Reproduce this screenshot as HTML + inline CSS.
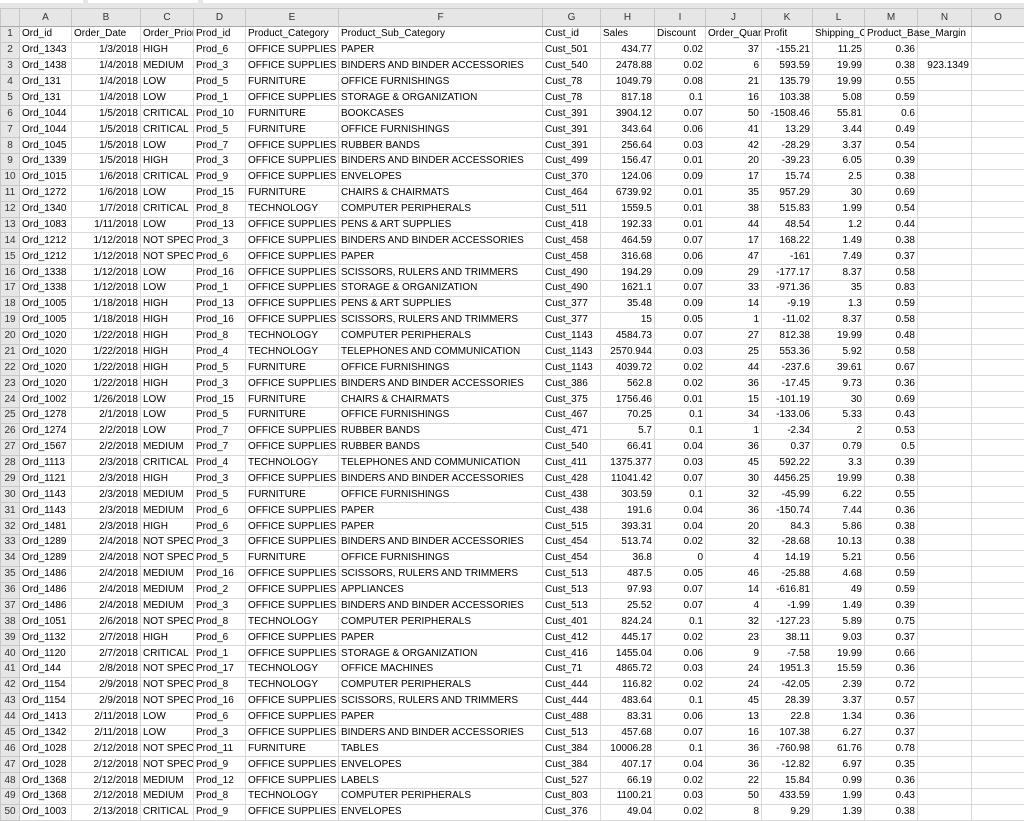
<!DOCTYPE html>
<html><head><meta charset="utf-8"><style>
body{margin:0;width:1024px;height:819px;overflow:hidden;background:#fff;font-family:"Liberation Sans",Arial,sans-serif;font-size:10px;color:#000;position:relative}
.top{position:absolute;left:0;top:0;width:1024px;height:8px;background:#e6e6e6}
.top div{position:absolute;top:0;height:3px;background:#fff}
table{position:absolute;left:0;top:8px;border-collapse:collapse;table-layout:fixed;width:1024px}
td,th{border:1px solid #d9d9d9;padding:0 2px;white-space:nowrap;overflow:hidden;height:14.88px;line-height:14px;font-weight:normal;box-sizing:border-box}
tr{height:15.88px}
th{background:#e6e6e6;color:#333;text-align:center;border-color:#c8c8c8}
tr.h{height:18px}
tr.h th{height:18px;border-bottom:1px solid #aaa}
td:nth-child(3),td:nth-child(n+9){text-align:right}
tr.f td{text-align:left}
</style></head><body>
<div class="top"><div style="left:0;width:83px"></div><div style="left:88px;width:110px"></div><div style="left:203px;width:821px"></div></div>
<table>
<colgroup><col style="width:19px"><col style="width:52px"><col style="width:69px"><col style="width:53px"><col style="width:52px"><col style="width:93px"><col style="width:204px"><col style="width:58px"><col style="width:54px"><col style="width:51px"><col style="width:56px"><col style="width:51px"><col style="width:52px"><col style="width:53px"><col style="width:54px"><col style="width:53px"></colgroup>
<tr class="h"><th></th><th>A</th><th>B</th><th>C</th><th>D</th><th>E</th><th>F</th><th>G</th><th>H</th><th>I</th><th>J</th><th>K</th><th>L</th><th>M</th><th>N</th><th>O</th></tr>
<tr class="f"><th>1</th><td>Ord_id<td>Order_Date<td>Order_Priority<td>Prod_id<td>Product_Category<td>Product_Sub_Category<td>Cust_id<td>Sales<td>Discount<td>Order_Quantity<td>Profit<td>Shipping_Cost<td style="overflow:visible">Product_Base_Margin<td><td></tr>
<tr><th>2</th><td>Ord_1343<td>1/3/2018<td>HIGH<td>Prod_6<td>OFFICE SUPPLIES<td>PAPER<td>Cust_501<td>434.77<td>0.02<td>37<td>-155.21<td>11.25<td>0.36<td><td></tr>
<tr><th>3</th><td>Ord_1438<td>1/4/2018<td>MEDIUM<td>Prod_3<td>OFFICE SUPPLIES<td>BINDERS AND BINDER ACCESSORIES<td>Cust_540<td>2478.88<td>0.02<td>6<td>593.59<td>19.99<td>0.38<td>923.1349<td></tr>
<tr><th>4</th><td>Ord_131<td>1/4/2018<td>LOW<td>Prod_5<td>FURNITURE<td>OFFICE FURNISHINGS<td>Cust_78<td>1049.79<td>0.08<td>21<td>135.79<td>19.99<td>0.55<td><td></tr>
<tr><th>5</th><td>Ord_131<td>1/4/2018<td>LOW<td>Prod_1<td>OFFICE SUPPLIES<td>STORAGE &amp; ORGANIZATION<td>Cust_78<td>817.18<td>0.1<td>16<td>103.38<td>5.08<td>0.59<td><td></tr>
<tr><th>6</th><td>Ord_1044<td>1/5/2018<td>CRITICAL<td>Prod_10<td>FURNITURE<td>BOOKCASES<td>Cust_391<td>3904.12<td>0.07<td>50<td>-1508.46<td>55.81<td>0.6<td><td></tr>
<tr><th>7</th><td>Ord_1044<td>1/5/2018<td>CRITICAL<td>Prod_5<td>FURNITURE<td>OFFICE FURNISHINGS<td>Cust_391<td>343.64<td>0.06<td>41<td>13.29<td>3.44<td>0.49<td><td></tr>
<tr><th>8</th><td>Ord_1045<td>1/5/2018<td>LOW<td>Prod_7<td>OFFICE SUPPLIES<td>RUBBER BANDS<td>Cust_391<td>256.64<td>0.03<td>42<td>-28.29<td>3.37<td>0.54<td><td></tr>
<tr><th>9</th><td>Ord_1339<td>1/5/2018<td>HIGH<td>Prod_3<td>OFFICE SUPPLIES<td>BINDERS AND BINDER ACCESSORIES<td>Cust_499<td>156.47<td>0.01<td>20<td>-39.23<td>6.05<td>0.39<td><td></tr>
<tr><th>10</th><td>Ord_1015<td>1/6/2018<td>CRITICAL<td>Prod_9<td>OFFICE SUPPLIES<td>ENVELOPES<td>Cust_370<td>124.06<td>0.09<td>17<td>15.74<td>2.5<td>0.38<td><td></tr>
<tr><th>11</th><td>Ord_1272<td>1/6/2018<td>LOW<td>Prod_15<td>FURNITURE<td>CHAIRS &amp; CHAIRMATS<td>Cust_464<td>6739.92<td>0.01<td>35<td>957.29<td>30<td>0.69<td><td></tr>
<tr><th>12</th><td>Ord_1340<td>1/7/2018<td>CRITICAL<td>Prod_8<td>TECHNOLOGY<td>COMPUTER PERIPHERALS<td>Cust_511<td>1559.5<td>0.01<td>38<td>515.83<td>1.99<td>0.54<td><td></tr>
<tr><th>13</th><td>Ord_1083<td>1/11/2018<td>LOW<td>Prod_13<td>OFFICE SUPPLIES<td>PENS &amp; ART SUPPLIES<td>Cust_418<td>192.33<td>0.01<td>44<td>48.54<td>1.2<td>0.44<td><td></tr>
<tr><th>14</th><td>Ord_1212<td>1/12/2018<td>NOT SPECIFIED<td>Prod_3<td>OFFICE SUPPLIES<td>BINDERS AND BINDER ACCESSORIES<td>Cust_458<td>464.59<td>0.07<td>17<td>168.22<td>1.49<td>0.38<td><td></tr>
<tr><th>15</th><td>Ord_1212<td>1/12/2018<td>NOT SPECIFIED<td>Prod_6<td>OFFICE SUPPLIES<td>PAPER<td>Cust_458<td>316.68<td>0.06<td>47<td>-161<td>7.49<td>0.37<td><td></tr>
<tr><th>16</th><td>Ord_1338<td>1/12/2018<td>LOW<td>Prod_16<td>OFFICE SUPPLIES<td>SCISSORS, RULERS AND TRIMMERS<td>Cust_490<td>194.29<td>0.09<td>29<td>-177.17<td>8.37<td>0.58<td><td></tr>
<tr><th>17</th><td>Ord_1338<td>1/12/2018<td>LOW<td>Prod_1<td>OFFICE SUPPLIES<td>STORAGE &amp; ORGANIZATION<td>Cust_490<td>1621.1<td>0.07<td>33<td>-971.36<td>35<td>0.83<td><td></tr>
<tr><th>18</th><td>Ord_1005<td>1/18/2018<td>HIGH<td>Prod_13<td>OFFICE SUPPLIES<td>PENS &amp; ART SUPPLIES<td>Cust_377<td>35.48<td>0.09<td>14<td>-9.19<td>1.3<td>0.59<td><td></tr>
<tr><th>19</th><td>Ord_1005<td>1/18/2018<td>HIGH<td>Prod_16<td>OFFICE SUPPLIES<td>SCISSORS, RULERS AND TRIMMERS<td>Cust_377<td>15<td>0.05<td>1<td>-11.02<td>8.37<td>0.58<td><td></tr>
<tr><th>20</th><td>Ord_1020<td>1/22/2018<td>HIGH<td>Prod_8<td>TECHNOLOGY<td>COMPUTER PERIPHERALS<td>Cust_1143<td>4584.73<td>0.07<td>27<td>812.38<td>19.99<td>0.48<td><td></tr>
<tr><th>21</th><td>Ord_1020<td>1/22/2018<td>HIGH<td>Prod_4<td>TECHNOLOGY<td>TELEPHONES AND COMMUNICATION<td>Cust_1143<td>2570.944<td>0.03<td>25<td>553.36<td>5.92<td>0.58<td><td></tr>
<tr><th>22</th><td>Ord_1020<td>1/22/2018<td>HIGH<td>Prod_5<td>FURNITURE<td>OFFICE FURNISHINGS<td>Cust_1143<td>4039.72<td>0.02<td>44<td>-237.6<td>39.61<td>0.67<td><td></tr>
<tr><th>23</th><td>Ord_1020<td>1/22/2018<td>HIGH<td>Prod_3<td>OFFICE SUPPLIES<td>BINDERS AND BINDER ACCESSORIES<td>Cust_386<td>562.8<td>0.02<td>36<td>-17.45<td>9.73<td>0.36<td><td></tr>
<tr><th>24</th><td>Ord_1002<td>1/26/2018<td>LOW<td>Prod_15<td>FURNITURE<td>CHAIRS &amp; CHAIRMATS<td>Cust_375<td>1756.46<td>0.01<td>15<td>-101.19<td>30<td>0.69<td><td></tr>
<tr><th>25</th><td>Ord_1278<td>2/1/2018<td>LOW<td>Prod_5<td>FURNITURE<td>OFFICE FURNISHINGS<td>Cust_467<td>70.25<td>0.1<td>34<td>-133.06<td>5.33<td>0.43<td><td></tr>
<tr><th>26</th><td>Ord_1274<td>2/2/2018<td>LOW<td>Prod_7<td>OFFICE SUPPLIES<td>RUBBER BANDS<td>Cust_471<td>5.7<td>0.1<td>1<td>-2.34<td>2<td>0.53<td><td></tr>
<tr><th>27</th><td>Ord_1567<td>2/2/2018<td>MEDIUM<td>Prod_7<td>OFFICE SUPPLIES<td>RUBBER BANDS<td>Cust_540<td>66.41<td>0.04<td>36<td>0.37<td>0.79<td>0.5<td><td></tr>
<tr><th>28</th><td>Ord_1113<td>2/3/2018<td>CRITICAL<td>Prod_4<td>TECHNOLOGY<td>TELEPHONES AND COMMUNICATION<td>Cust_411<td>1375.377<td>0.03<td>45<td>592.22<td>3.3<td>0.39<td><td></tr>
<tr><th>29</th><td>Ord_1121<td>2/3/2018<td>HIGH<td>Prod_3<td>OFFICE SUPPLIES<td>BINDERS AND BINDER ACCESSORIES<td>Cust_428<td>11041.42<td>0.07<td>30<td>4456.25<td>19.99<td>0.38<td><td></tr>
<tr><th>30</th><td>Ord_1143<td>2/3/2018<td>MEDIUM<td>Prod_5<td>FURNITURE<td>OFFICE FURNISHINGS<td>Cust_438<td>303.59<td>0.1<td>32<td>-45.99<td>6.22<td>0.55<td><td></tr>
<tr><th>31</th><td>Ord_1143<td>2/3/2018<td>MEDIUM<td>Prod_6<td>OFFICE SUPPLIES<td>PAPER<td>Cust_438<td>191.6<td>0.04<td>36<td>-150.74<td>7.44<td>0.36<td><td></tr>
<tr><th>32</th><td>Ord_1481<td>2/3/2018<td>HIGH<td>Prod_6<td>OFFICE SUPPLIES<td>PAPER<td>Cust_515<td>393.31<td>0.04<td>20<td>84.3<td>5.86<td>0.38<td><td></tr>
<tr><th>33</th><td>Ord_1289<td>2/4/2018<td>NOT SPECIFIED<td>Prod_3<td>OFFICE SUPPLIES<td>BINDERS AND BINDER ACCESSORIES<td>Cust_454<td>513.74<td>0.02<td>32<td>-28.68<td>10.13<td>0.38<td><td></tr>
<tr><th>34</th><td>Ord_1289<td>2/4/2018<td>NOT SPECIFIED<td>Prod_5<td>FURNITURE<td>OFFICE FURNISHINGS<td>Cust_454<td>36.8<td>0<td>4<td>14.19<td>5.21<td>0.56<td><td></tr>
<tr><th>35</th><td>Ord_1486<td>2/4/2018<td>MEDIUM<td>Prod_16<td>OFFICE SUPPLIES<td>SCISSORS, RULERS AND TRIMMERS<td>Cust_513<td>487.5<td>0.05<td>46<td>-25.88<td>4.68<td>0.59<td><td></tr>
<tr><th>36</th><td>Ord_1486<td>2/4/2018<td>MEDIUM<td>Prod_2<td>OFFICE SUPPLIES<td>APPLIANCES<td>Cust_513<td>97.93<td>0.07<td>14<td>-616.81<td>49<td>0.59<td><td></tr>
<tr><th>37</th><td>Ord_1486<td>2/4/2018<td>MEDIUM<td>Prod_3<td>OFFICE SUPPLIES<td>BINDERS AND BINDER ACCESSORIES<td>Cust_513<td>25.52<td>0.07<td>4<td>-1.99<td>1.49<td>0.39<td><td></tr>
<tr><th>38</th><td>Ord_1051<td>2/6/2018<td>NOT SPECIFIED<td>Prod_8<td>TECHNOLOGY<td>COMPUTER PERIPHERALS<td>Cust_401<td>824.24<td>0.1<td>32<td>-127.23<td>5.89<td>0.75<td><td></tr>
<tr><th>39</th><td>Ord_1132<td>2/7/2018<td>HIGH<td>Prod_6<td>OFFICE SUPPLIES<td>PAPER<td>Cust_412<td>445.17<td>0.02<td>23<td>38.11<td>9.03<td>0.37<td><td></tr>
<tr><th>40</th><td>Ord_1120<td>2/7/2018<td>CRITICAL<td>Prod_1<td>OFFICE SUPPLIES<td>STORAGE &amp; ORGANIZATION<td>Cust_416<td>1455.04<td>0.06<td>9<td>-7.58<td>19.99<td>0.66<td><td></tr>
<tr><th>41</th><td>Ord_144<td>2/8/2018<td>NOT SPECIFIED<td>Prod_17<td>TECHNOLOGY<td>OFFICE MACHINES<td>Cust_71<td>4865.72<td>0.03<td>24<td>1951.3<td>15.59<td>0.36<td><td></tr>
<tr><th>42</th><td>Ord_1154<td>2/9/2018<td>NOT SPECIFIED<td>Prod_8<td>TECHNOLOGY<td>COMPUTER PERIPHERALS<td>Cust_444<td>116.82<td>0.02<td>24<td>-42.05<td>2.39<td>0.72<td><td></tr>
<tr><th>43</th><td>Ord_1154<td>2/9/2018<td>NOT SPECIFIED<td>Prod_16<td>OFFICE SUPPLIES<td>SCISSORS, RULERS AND TRIMMERS<td>Cust_444<td>483.64<td>0.1<td>45<td>28.39<td>3.37<td>0.57<td><td></tr>
<tr><th>44</th><td>Ord_1413<td>2/11/2018<td>LOW<td>Prod_6<td>OFFICE SUPPLIES<td>PAPER<td>Cust_488<td>83.31<td>0.06<td>13<td>22.8<td>1.34<td>0.36<td><td></tr>
<tr><th>45</th><td>Ord_1342<td>2/11/2018<td>LOW<td>Prod_3<td>OFFICE SUPPLIES<td>BINDERS AND BINDER ACCESSORIES<td>Cust_513<td>457.68<td>0.07<td>16<td>107.38<td>6.27<td>0.37<td><td></tr>
<tr><th>46</th><td>Ord_1028<td>2/12/2018<td>NOT SPECIFIED<td>Prod_11<td>FURNITURE<td>TABLES<td>Cust_384<td>10006.28<td>0.1<td>36<td>-760.98<td>61.76<td>0.78<td><td></tr>
<tr><th>47</th><td>Ord_1028<td>2/12/2018<td>NOT SPECIFIED<td>Prod_9<td>OFFICE SUPPLIES<td>ENVELOPES<td>Cust_384<td>407.17<td>0.04<td>36<td>-12.82<td>6.97<td>0.35<td><td></tr>
<tr><th>48</th><td>Ord_1368<td>2/12/2018<td>MEDIUM<td>Prod_12<td>OFFICE SUPPLIES<td>LABELS<td>Cust_527<td>66.19<td>0.02<td>22<td>15.84<td>0.99<td>0.36<td><td></tr>
<tr><th>49</th><td>Ord_1368<td>2/12/2018<td>MEDIUM<td>Prod_8<td>TECHNOLOGY<td>COMPUTER PERIPHERALS<td>Cust_803<td>1100.21<td>0.03<td>50<td>433.59<td>1.99<td>0.43<td><td></tr>
<tr><th>50</th><td>Ord_1003<td>2/13/2018<td>CRITICAL<td>Prod_9<td>OFFICE SUPPLIES<td>ENVELOPES<td>Cust_376<td>49.04<td>0.02<td>8<td>9.29<td>1.39<td>0.38<td><td></tr>
</table>
</body></html>
